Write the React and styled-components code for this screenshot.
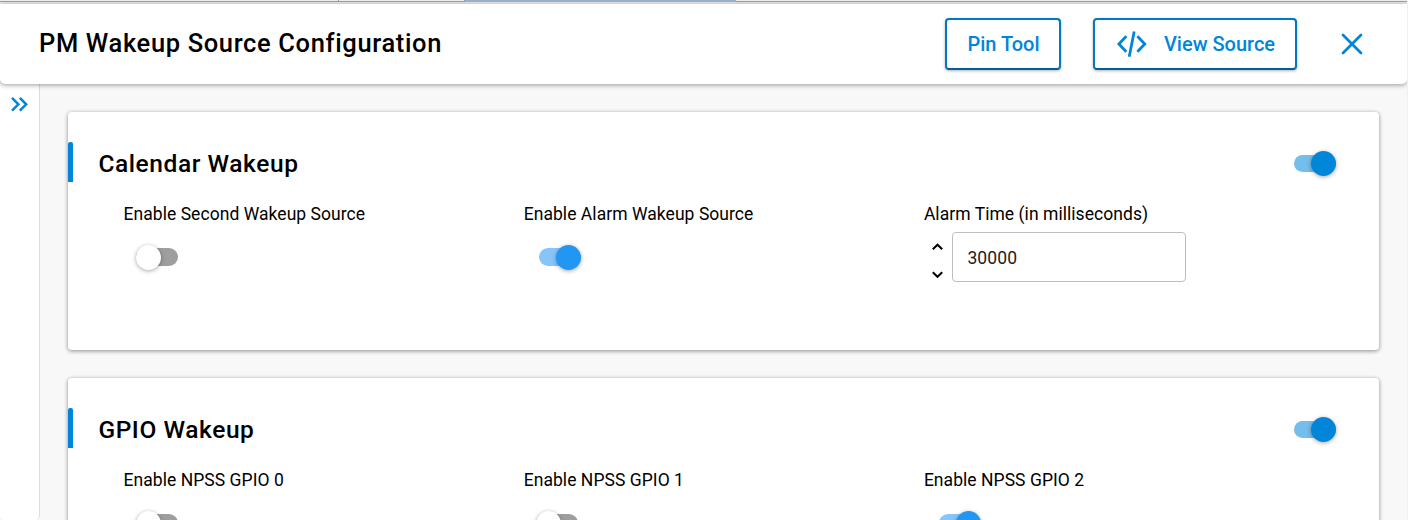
import React from "react";
import styled, { createGlobalStyle } from "styled-components";

const GlobalStyle = createGlobalStyle`
  * { box-sizing: border-box; }
  body {
    margin: 0;
    background: #f8f8f8;
    font-family: Roboto, "Liberation Sans", sans-serif;
    color: #000;
    overflow: hidden;
  }
`;

const Page = styled.div`
  display: flex;
  flex-direction: column;
  height: 520px;
  width: 1408px;
  overflow: hidden;
  border-right: 1px solid #f0f0f0;
`;

const TabStrip = styled.div`
  flex: none;
  display: flex;
  height: 4px;
  width: 1408px;
  padding-bottom: 2px;
  background: #ebedeb;
`;

const StripTab = styled.div`
  width: ${(p) => p.$width}px;
  background: ${(p) => (p.$active ? "#99b4d1" : "#f0f0f0")};
  border-right: ${(p) => (p.$active ? "0" : "1px")} solid #a0a0a0;
  border-bottom: ${(p) => (p.$active ? "0" : "1px")} solid #a0a0a0;
`;

const Header = styled.header`
  flex: none;
  position: relative;
  z-index: 1;
  display: flex;
  align-items: center;
  height: 80px;
  padding: 0 39px;
  background: #fff;
  border-radius: 0 0 5px 5px;
  box-shadow: 0 1px 5px rgba(0, 0, 0, 0.4);
`;

const Title = styled.h1`
  flex: 1;
  margin: 0 0 1px;
  font-size: 25.5px;
  line-height: 33px;
  font-weight: 500;
  letter-spacing: 0.64px;
`;

const OutlineButton = styled.button`
  display: flex;
  align-items: center;
  justify-content: center;
  gap: 17px;
  width: ${(p) => p.$width}px;
  height: 52px;
  margin-right: 32px;
  padding: 0 0 0 1px;
  background: #fff;
  border: 2px solid #0079c4;
  border-bottom-color: #005f9b;
  border-radius: 4px;
  box-shadow: 0 1px 3px rgba(0, 0, 0, 0.3);
  color: #0086d9;
  font: 500 20px/24px Roboto, sans-serif;
`;

const IconButton = styled.button`
  display: flex;
  align-items: center;
  justify-content: center;
  width: 30px;
  height: 30px;
  margin: 0 1px 0 8px;
  padding: 0;
  border: 0;
  background: none;
`;

const Body = styled.div`
  display: flex;
  flex: 1;
  min-height: 0;
`;

const Sidebar = styled.aside`
  width: 40px;
  padding: 13px 0 0 11px;
  background: #fff;
  border-right: 1px solid #dcdcdc;
  border-radius: 0 0 5px 5px;
`;

const Content = styled.main`
  flex: 1;
  display: flex;
  flex-direction: column;
  gap: 28px;
  padding: 28px 28px 0;
  min-width: 0;
`;

const Card = styled.section`
  flex: none;
  height: 238px;
  padding-top: 30px;
  background: #fff;
  border-radius: 4px;
  box-shadow: 0 1px 4px rgba(0, 0, 0, 0.45);
`;

const CardHead = styled.div`
  display: flex;
  align-items: center;
  height: 40px;
  padding-right: 42px;
`;

const Accent = styled.div`
  width: 5px;
  height: 40px;
  background: #0086d9;
  border-radius: 2px 2px 0 0;
`;

const CardTitle = styled.h2`
  flex: 1;
  margin: 4px 0 0 25.4px;
  font-size: 24.5px;
  line-height: 32px;
  font-weight: 500;
  letter-spacing: 0.58px;
`;

const Fields = styled.div`
  display: grid;
  grid-template-columns: 400.2px 400.2px 1fr;
  padding: 20px 0 0 55.5px;
`;

const Label = styled.div`
  font-size: 17.5px;
  line-height: 24px;
  letter-spacing: 0.05px;
  white-space: nowrap;
`;

const Track = styled.div`
  display: flex;
  justify-content: ${(p) => (p.$on ? "flex-end" : "flex-start")};
  align-items: center;
  width: 42px;
  height: ${(p) => (p.$small ? 17 : 18)}px;
  margin: ${(p) => (p.$small ? "3px 1px 0 0" : p.$on ? "22px 0 0 15px" : "22px 0 0 12.5px")};
  border-radius: 9px;
  background: ${(p) => (!p.$on ? "#9e9e9e" : p.$small ? "#75bdea" : "#87c5f8")};
`;

const Knob = styled.div`
  flex: none;
  width: 25px;
  height: 25px;
  border-radius: 50%;
  background: ${(p) => (!p.$on ? "#fff" : p.$small ? "#0086d9" : "#2196f3")};
  box-shadow: 0 1px 4px rgba(0, 0, 0, 0.35);
`;

const NumberRow = styled.div`
  display: flex;
  margin-top: 6px;
`;

const Steps = styled.div`
  display: flex;
  flex-direction: column;
  gap: 20px;
  width: 28px;
  padding: 11px 0 0 7px;
  svg { display: block; }
`;

const NumberInput = styled.input`
  width: 234px;
  height: 50px;
  padding: 2px 14px 0 14.5px;
  border: 1px solid #bdbdbd;
  border-radius: 4px;
  background: #fff;
  color: #212121;
  font: 400 17.5px Roboto, sans-serif;
  letter-spacing: 0.16px;
`;

const Toggle = ({ on, small }) => (
  <Track $on={on} $small={small}>
    <Knob $on={on} $small={small} />
  </Track>
);

const SwitchField = ({ label, on }) => (
  <div>
    <Label>{label}</Label>
    <Toggle on={on} />
  </div>
);

const Chevron = ({ down }) => (
  <svg width="13" height="8" viewBox="0 0 13 8" fill="none" stroke="#000" strokeWidth="2">
    <path d={down ? "M1.8 1.2 6.5 5.8 11.2 1.2" : "M1.8 6.3 6.5 1.7 11.2 6.3"} />
  </svg>
);

const Group = ({ title, children }) => (
  <Card>
    <CardHead>
      <Accent />
      <CardTitle>{title}</CardTitle>
      <Toggle on small />
    </CardHead>
    <Fields>{children}</Fields>
  </Card>
);

export default function App() {
  return (
    <Page>
      <GlobalStyle />
      <TabStrip>
        <StripTab $width={339} />
        <StripTab $width={126} />
        <StripTab $width={271} $active />
        <StripTab $width={672} />
      </TabStrip>
      <Header>
        <Title>PM Wakeup Source Configuration</Title>
        <OutlineButton $width={116}>Pin Tool</OutlineButton>
        <OutlineButton $width={204}>
          <svg width="31" height="28" viewBox="0 0 31 28" fill="none" stroke="#0086d9" strokeWidth="2.8">
            <path d="M10.3 6.2 2.9 14l7.4 7.8M21.4 6.2l7.4 7.8-7.4 7.8M18.2 1.4l-5 25.4" />
          </svg>
          View Source
        </OutlineButton>
        <IconButton aria-label="Close">
          <svg width="24" height="24" viewBox="0 0 24 24" stroke="#0086d9" strokeWidth="2.7" strokeLinecap="round">
            <path d="M3 3 21 21M21 3 3 21" />
          </svg>
        </IconButton>
      </Header>
      <Body>
        <Sidebar>
          <svg width="17" height="15" viewBox="0 0 17 15" fill="none" stroke="#0086d9" strokeWidth="2.5">
            <path d="M1 .9 7.4 7.3 1 13.7M8.8.9l6.4 6.4-6.4 6.4" />
          </svg>
        </Sidebar>
        <Content>
          <Group title="Calendar Wakeup">
            <SwitchField label="Enable Second Wakeup Source" />
            <SwitchField label="Enable Alarm Wakeup Source" on />
            <div>
              <Label>Alarm Time (in milliseconds)</Label>
              <NumberRow>
                <Steps>
                  <Chevron />
                  <Chevron down />
                </Steps>
                <NumberInput defaultValue="30000" />
              </NumberRow>
            </div>
          </Group>
          <Group title="GPIO Wakeup">
            <SwitchField label="Enable NPSS GPIO 0" />
            <SwitchField label="Enable NPSS GPIO 1" />
            <SwitchField label="Enable NPSS GPIO 2" on />
          </Group>
        </Content>
      </Body>
    </Page>
  );
}
